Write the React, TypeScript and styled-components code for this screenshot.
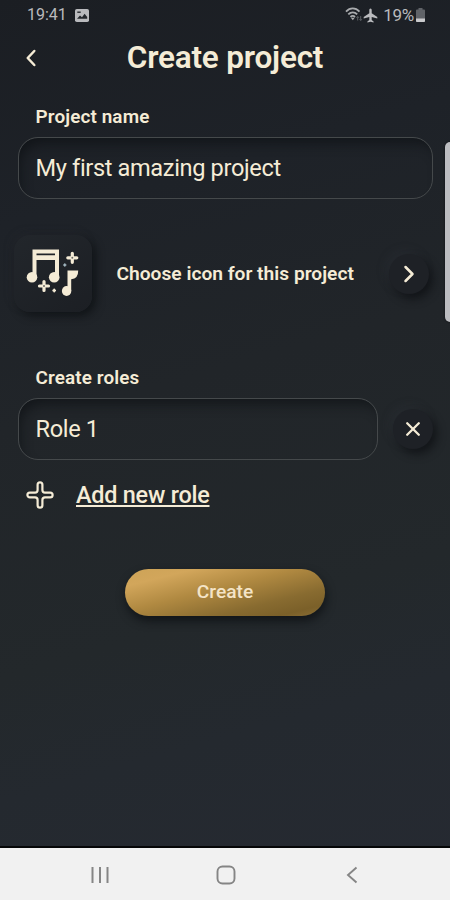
import React from 'react';
import styled, { createGlobalStyle } from 'styled-components';

const cream = '#f5ecd6';

const GlobalStyle = createGlobalStyle`
  * { box-sizing: border-box; }
  body { margin: 0; background: #1e2228; }
  button, input { font: inherit; color: inherit; border: 0; padding: 0; margin: 0; background: none; }
  svg { display: block; flex: none; }
`;

const Phone = styled.div`
  position: relative;
  display: flex;
  flex-direction: column;
  width: 450px;
  height: 900px;
  overflow: hidden;
  color: ${cream};
  font-family: Roboto, sans-serif;
  background: linear-gradient(164deg, #1b1e23 0%, #1e2228 22%, #212529 42%, #23282b 66%, #24292f 78%, #262a32 100%);
`;

const StatusBar = styled.div`
  display: flex;
  align-items: center;
  height: 30px;
  padding: 0 25px 0 27px;
  color: #b9babd;
  font-size: 16px;
  line-height: 30px;
`;

const Clock = styled.span`
  width: 48px;
`;

const StatusIcons = styled.div`
  display: flex;
  align-items: center;
  margin-left: auto;
`;

const Battery = styled.span`
  margin: 0 2px 0 5px;
  font-size: 17px;
  letter-spacing: -0.3px;
`;

const Header = styled.header`
  display: grid;
  grid-template-columns: 62px 1fr 62px;
  align-items: center;
  height: 56px;
`;

const BackButton = styled.button`
  display: flex;
  padding-left: 25px;
`;

const Title = styled.h1`
  margin: 0;
  text-align: center;
  font-size: 31.5px;
  line-height: 56px;
  font-weight: 600;
  letter-spacing: -0.2px;
  white-space: nowrap;
`;

const Form = styled.main`
  display: flex;
  flex-direction: column;
  flex: 1;
`;

const Label = styled.label<{ $top: number }>`
  margin: ${(p) => p.$top}px 0 0 35.5px;
  height: 22px;
  font-size: 18.9px;
  line-height: 22px;
  font-weight: 600;
  letter-spacing: 0.12px;
`;

const FieldRow = styled.div`
  display: flex;
  align-items: center;
  gap: 15px;
  padding: 0 17px 0 18px;
  margin-top: 9px;
`;

const Field = styled.input`
  flex: 1;
  min-width: 0;
  height: 62px;
  padding: 0 16.5px;
  border: 1.5px solid #45494b;
  border-radius: 20px;
  outline: none;
  font-size: 23.6px;
  letter-spacing: -0.36px;
  box-shadow: inset 5px 9px 12px -4px rgba(12, 15, 17, 0.62);
`;

const RoundButton = styled.button`
  display: flex;
  align-items: center;
  justify-content: center;
  flex: none;
  width: 40px;
  height: 40px;
  border-radius: 50%;
  background: #1e2126;
  box-shadow: 4px 5px 8px rgba(10, 12, 15, 0.6), -4px -4px 8px rgba(52, 57, 62, 0.25);
`;

const IconRow = styled.div`
  display: flex;
  align-items: center;
  height: 77px;
  margin-top: 36px;
  padding: 0 21px 0 14px;
`;

const IconTile = styled.div`
  width: 78px;
  height: 77px;
  border-radius: 16px;
  background: linear-gradient(145deg, #22262b, #1c1f24);
  box-shadow: 4px 4px 8px rgba(9, 11, 14, 0.6), -3px -3px 8px rgba(48, 52, 58, 0.18);
`;

const RowText = styled.span`
  flex: 1;
  margin-left: 24.5px;
  font-size: 19.2px;
  font-weight: 600;
  white-space: nowrap;
`;

const AddRole = styled.button`
  display: flex;
  align-items: center;
  gap: 22px;
  height: 30px;
  margin: 20px 0 0 26px;
  font-size: 23.4px;
  letter-spacing: -0.22px;
  font-weight: 500;
  text-decoration: underline;
  text-decoration-thickness: 2px;
  text-underline-offset: 2px;
  text-decoration-skip-ink: none;
`;

const CreateButton = styled.button`
  align-self: center;
  width: 200px;
  height: 47px;
  margin-top: 59px;
  padding-bottom: 2px;
  border-radius: 24px;
  color: #f4e4c7;
  font-size: 19.2px;
  font-weight: 500;
  line-height: 44px;
  background: linear-gradient(166deg, #cda357 0%, #d2a65b 18%, #b08941 44%, #886b30 72%, #7b6029 88%, #8b6e35 100%);
  box-shadow: 1px 5px 10px rgba(10, 13, 15, 0.7);
`;

const EdgeHandle = styled.div`
  position: absolute;
  top: 142px;
  right: -6px;
  width: 11px;
  height: 180px;
  border-radius: 5px;
  background: #bcbdc1;
  box-shadow: 0 0 2px #0c0e11;
`;

const NavBar = styled.nav`
  display: grid;
  grid-template-columns: repeat(3, 126px);
  justify-content: center;
  justify-items: center;
  align-items: center;
  height: 54px;
  padding: 1px 0 0 1px;
  border-top: 2px solid #050607;
  color: #858585;
  background: #f1f1f1;
`;

const PictureIcon = () => (
  <svg width="14" height="13" viewBox="0 0 14 13">
    <rect width="14" height="13" rx="1.8" fill="#b9babd" />
    <path d="M2 9.8 5 6.5l2 1.7 2.6-3.4L12.2 8v1.8z" fill="#24282d" />
    <path d="M2.3 2.5h3.4v1.4H2.3z" fill="#24282d" />
  </svg>
);

const WifiIcon = () => (
  <svg width="18" height="16" viewBox="0 0 18 16" fill="none" stroke="#a9abae">
    <path d="M1 4.6C5 .4 10.5 .4 14.5 4.6M3.3 7.4c2.7-2.8 6.2-2.8 8.9 0M5.5 10c1.5-1.5 3-1.5 4.5 0" strokeWidth="1.8" />
    <path d="m5.9 10.8 1.9 2.4 1.9-2.4z" fill="#a9abae" stroke="none" />
    <path d="M12.7 13.5v-4m-1.2 1.3 1.2-1.3 1.2 1.3M15.7 9v4.5m-1.2-1.3 1.2 1.3 1.2-1.3" stroke="#5b5e63" />
  </svg>
);

const PlaneIcon = () => (
  <svg width="15" height="15" viewBox="0 0 15 15" fill="#babbbe">
    <path d="M7.5.5c.8 0 1.2.8 1.2 1.6v3.2l5.6 3.6v1.7L8.7 9v3l1.9 1.4v1.2l-3.1-.8-3.1.8v-1.2L6.3 12V9L.7 10.6V8.900l5.600-3.600V2.100c0-.8.4-1.600 1.200-1.600z" />
  </svg>
);

const BatteryIcon = () => (
  <svg width="9" height="14" viewBox="0 0 9 14">
    <path d="M2.5 0h4v1.5H8q1 0 1 1V13q0 1-1 1H1q-1 0-1-1V2.5q0-1 1-1h1.5z" fill="#606368" />
    <path d="M0 10.5h9V13q0 1-1 1H1q-1 0-1-1z" fill="#c9cacc" />
  </svg>
);

const Chevron = ({ left = false }: { left?: boolean }) => (
  <svg width="12" height="18" viewBox="0 0 12 18" fill="none" stroke={cream} strokeWidth="2.5" strokeLinecap="round" strokeLinejoin="round">
    <path d={left ? 'M9.3 2 2.7 9l6.6 7' : 'M2.5 2l7 7-7 7'} />
  </svg>
);

const CloseIcon = () => (
  <svg width="16" height="16" viewBox="0 0 16 16" stroke={cream} strokeWidth="2.3" strokeLinecap="round">
    <path d="m2.2 2.2 11.6 11.6M13.8 2.2 2.2 13.8" />
  </svg>
);

const PlusIcon = () => (
  <svg width="28" height="28" viewBox="0 0 28 28" fill="none" stroke={cream} strokeWidth="2.2" strokeLinejoin="round">
    <path d="M11.6 3.8a2.4 2.4 0 0 1 4.8 0v5.2q0 2.6 2.6 2.6h5.2a2.4 2.4 0 0 1 0 4.8H19q-2.6 0-2.6 2.6v5.2a2.4 2.4 0 0 1-4.8 0V19q0-2.6-2.6-2.6H3.8a2.4 2.4 0 0 1 0-4.8H9q2.6 0 2.6-2.6z" />
  </svg>
);

const NotesIcon = () => (
  <svg width="78" height="77" viewBox="0 0 78 77" fill={cream}>
    <path fillRule="evenodd" d="M18.5 14.500H45v29h-4V25H22.500v17.500h-4zM22.500 18.500v1.800H41v-1.800z" />
    <ellipse cx="18" cy="42.200" rx="5.300" ry="5.200" />
    <ellipse cx="40.200" cy="42.200" rx="5.300" ry="5.200" />
    <path d="M53.500 35.500h10.700q.2 8.200-7 8.700V56h-3.700z" />
    <ellipse cx="52.600" cy="56" rx="4.700" ry="5" />
    <g stroke={cream} strokeWidth="3.2" strokeLinecap="round">
      <path d="M58.300 18.300v9M53.800 22.800h9M30 46.500v9M25.500 51h9" />
      <path d="M50.800 29v2M49.800 30h2" stroke="#9fb4bd" strokeWidth="1.6" />
      <path d="M40.200 54.500v2M39.200 55.500h2" strokeWidth="1.8" />
    </g>
    <circle cx="58.300" cy="22.800" r="1" fill="#6a6a66" />
    <circle cx="30" cy="51" r="1" fill="#6a6a66" />
  </svg>
);

const RecentsIcon = () => (
  <svg width="18" height="18" viewBox="0 0 18 18" stroke="currentColor" strokeWidth="2">
    <path d="M1.500 1v16M9 1v16M16.500 1v16" />
  </svg>
);

const HomeIcon = () => (
  <svg width="20" height="20" viewBox="0 0 20 20" fill="none" stroke="currentColor" strokeWidth="1.9">
    <rect x="1.5" y="1.5" width="17" height="17" rx="5" />
  </svg>
);

const NavBackIcon = () => (
  <svg width="12" height="18" viewBox="0 0 12 18" fill="none" stroke="currentColor" strokeWidth="1.9">
    <path d="M10.500 1.500 2 9l8.500 7.500" />
  </svg>
);

export default function App() {
  return (
    <Phone>
      <GlobalStyle />
      <StatusBar>
        <Clock>19:41</Clock>
        <PictureIcon />
        <StatusIcons>
          <WifiIcon />
          <PlaneIcon />
          <Battery>19%</Battery>
          <BatteryIcon />
        </StatusIcons>
      </StatusBar>
      <Header>
        <BackButton aria-label="Back"><Chevron left /></BackButton>
        <Title>Create project</Title>
      </Header>
      <Form>
        <Label $top={20} htmlFor="project">Project name</Label>
        <FieldRow>
          <Field id="project" defaultValue="My first amazing project" />
        </FieldRow>
        <IconRow>
          <IconTile><NotesIcon /></IconTile>
          <RowText>Choose icon for this project</RowText>
          <RoundButton aria-label="Choose icon"><Chevron /></RoundButton>
        </IconRow>
        <Label $top={55} htmlFor="role">Create roles</Label>
        <FieldRow>
          <Field id="role" defaultValue="Role 1" />
          <RoundButton aria-label="Remove role"><CloseIcon /></RoundButton>
        </FieldRow>
        <AddRole><PlusIcon />Add new role</AddRole>
        <CreateButton>Create</CreateButton>
      </Form>
      <EdgeHandle />
      <NavBar>
        <RecentsIcon />
        <HomeIcon />
        <NavBackIcon />
      </NavBar>
    </Phone>
  );
}
